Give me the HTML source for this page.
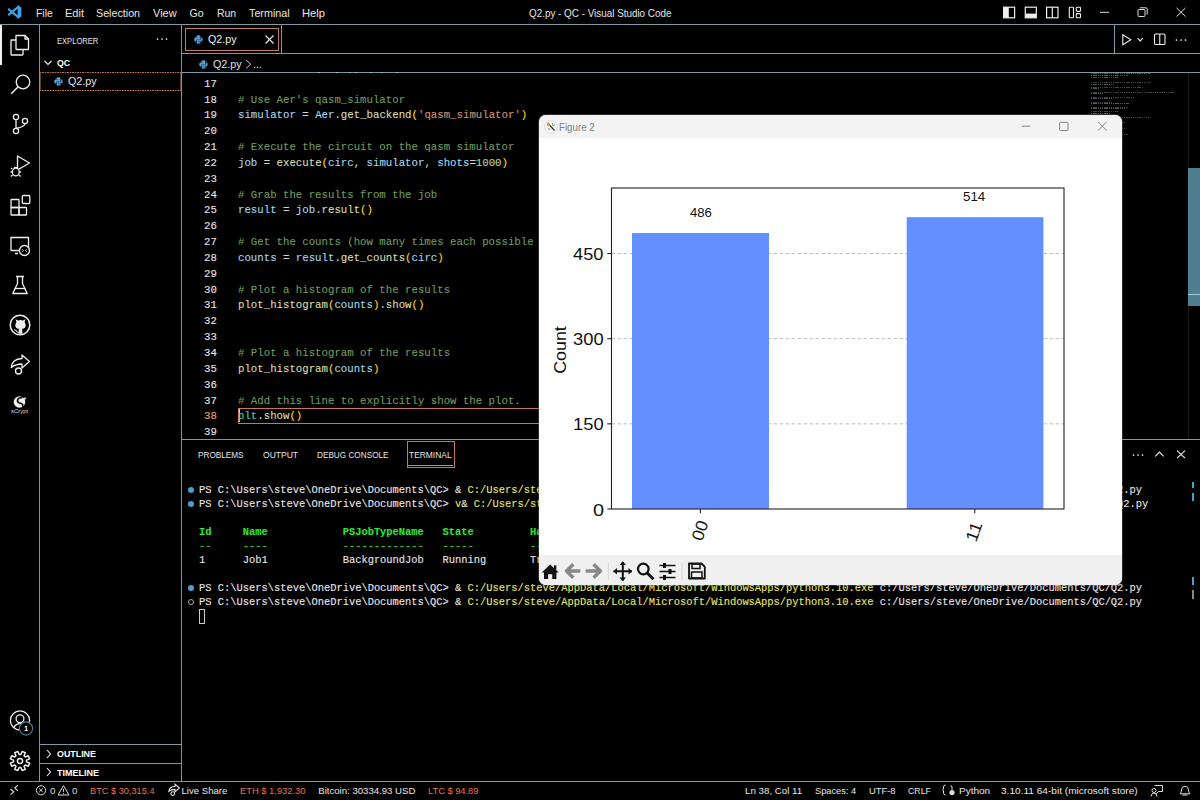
<!DOCTYPE html>
<html><head><meta charset="utf-8">
<style>
*{margin:0;padding:0;box-sizing:border-box}
html,body{width:1200px;height:800px;overflow:hidden;background:#000;color:#fff;font-family:"Liberation Sans",sans-serif}
.a{position:absolute}
.t{position:absolute;white-space:pre;line-height:1}
.m{-webkit-text-stroke:0.12px currentColor}
.m span{-webkit-text-stroke:0.12px}
.hl{position:absolute;background:#7b9ba6}
</style></head><body>

<div class="hl" style="left:0;top:24px;width:1200px;height:1px"></div>
<svg class="a" style="left:0;top:0" width="30" height="24" viewBox="0 0 30 24">
<path d="M18.6 6.6 L8.8 14.6 M18.6 17.4 L8.8 9.4" stroke="#3d9fe6" stroke-width="2.2" stroke-linecap="round"/>
<path d="M17.6 5.6 L21.4 7.4 V16.6 L17.6 18.4 Z" fill="#3d9fe6"/>
</svg>
<div class="t" style="left:35.78px;top:7.54px;font-size:10.50px;color:#e6e6e6;transform:scaleX(0.9900);transform-origin:0 0;">File</div>
<div class="t" style="left:64.75px;top:7.54px;font-size:10.50px;color:#e6e6e6;transform:scaleX(1.0529);transform-origin:0 0;">Edit</div>
<div class="t" style="left:96.46px;top:7.54px;font-size:10.50px;color:#e6e6e6;transform:scaleX(1.0198);transform-origin:0 0;">Selection</div>
<div class="t" style="left:153.15px;top:7.54px;font-size:10.50px;color:#e6e6e6;transform:scaleX(1.0478);transform-origin:0 0;">View</div>
<div class="t" style="left:189.47px;top:7.54px;font-size:10.50px;color:#e6e6e6;">Go</div>
<div class="t" style="left:216.98px;top:7.54px;font-size:10.50px;color:#e6e6e6;transform:scaleX(0.9942);transform-origin:0 0;">Run</div>
<div class="t" style="left:249.21px;top:7.54px;font-size:10.50px;color:#e6e6e6;transform:scaleX(1.0257);transform-origin:0 0;">Terminal</div>
<div class="t" style="left:302.44px;top:7.54px;font-size:10.50px;color:#e6e6e6;transform:scaleX(1.0673);transform-origin:0 0;">Help</div>
<div class="t" style="left:528.81px;top:7.54px;font-size:10.50px;color:#e6e6e6;transform:scaleX(0.9400);transform-origin:0 0;">Q2.py - QC - Visual Studio Code</div>
<svg class="a" style="left:1000px;top:0" width="200" height="24" viewBox="0 0 200 24">
<rect x="3.6" y="7.2" width="11" height="10.6" fill="none" stroke="#eee" stroke-width="1.2"/>
<rect x="3.6" y="7.2" width="5.2" height="10.6" fill="#eee"/>
<rect x="25.3" y="7.2" width="11" height="10.6" fill="none" stroke="#eee" stroke-width="1.2"/>
<rect x="25.3" y="13.6" width="11" height="4.2" fill="#eee"/>
<rect x="46.6" y="7.2" width="11.4" height="10.6" fill="none" stroke="#eee" stroke-width="1.2"/>
<line x1="52.3" y1="7.2" x2="52.3" y2="17.8" stroke="#eee" stroke-width="1.2"/>
<rect x="69.3" y="7.2" width="4.2" height="10.6" rx="0.8" fill="none" stroke="#eee" stroke-width="1.1"/>
<rect x="76.3" y="7.2" width="4.2" height="4.2" rx="0.8" fill="none" stroke="#eee" stroke-width="1.1"/>
<rect x="76.3" y="13.6" width="4.2" height="4.2" rx="0.8" fill="none" stroke="#eee" stroke-width="1.1"/>
<line x1="100" y1="12.3" x2="109" y2="12.3" stroke="#ddd" stroke-width="1"/>
<rect x="138" y="9.5" width="7" height="7" rx="1" fill="none" stroke="#ddd" stroke-width="1"/>
<path d="M140 7.8 H146 Q147.2 7.8 147.2 9 V14.5" fill="none" stroke="#ddd" stroke-width="1"/>
<path d="M176.5 7.9 L185.5 16.6 M185.5 7.9 L176.5 16.6" stroke="#ddd" stroke-width="1"/>
</svg>
<div class="hl" style="left:39px;top:25px;width:1px;height:757px"></div>
<div class="a" style="left:0;top:25px;width:2px;height:40px;background:#f0f0f0"></div>
<svg class="a" style="left:0;top:25px" width="40" height="400" viewBox="0 0 40 400" fill="none" stroke="#eeeeee" stroke-width="1.3" stroke-linejoin="round">
<path d="M16 10.5 H25 L28.5 14 V24 Q28.5 24.5 28 24.5 H16.5 Q16 24.5 16 24 Z"/>
<path d="M25 10.5 V14 H28.5"/>
<path d="M16 15 H11.5 Q11 15 11 15.5 V29.5 Q11 30 11.5 30 H22.5 Q23 30 23 29.5 V24.5"/>
<circle cx="23" cy="57" r="6.8"/>
<path d="M18.2 61.8 L11.2 68.8" stroke-width="1.5"/>
<circle cx="16" cy="92" r="2.6"/>
<circle cx="16" cy="106" r="2.6"/>
<circle cx="25" cy="96" r="2.6"/>
<path d="M16 94.6 V103.4 M25 98.6 Q25 102 16 103.5"/>
<g transform="translate(0,2)"><path d="M17.5 129 L29.5 136 L17.5 143 Z"/>
<ellipse cx="15.8" cy="145" rx="3.4" ry="3.9" fill="#000"/>
<path d="M12 142 L11 141 M19.6 142 L20.6 141 M12.4 145 H10.5 M19.2 145 H21.1 M12.4 148 L11 149.5 M19.2 148 L20.6 149.5 M14 141.3 Q15.8 139.5 17.6 141.3"/></g>
<rect x="11" y="174.5" width="8" height="8" rx="0.6"/>
<rect x="11" y="182.5" width="8" height="7.5" rx="0.6"/>
<rect x="19" y="182.5" width="7.5" height="7.5" rx="0.6"/>
<rect x="22.3" y="170.5" width="7.5" height="8" rx="1"/>
<path d="M11 212.5 H28.5 V225.5 H11 Z M15 228.5 H18"/>
<circle cx="24.5" cy="225.5" r="5" fill="#000"/>
<path d="M22.2 224.3 L23.5 225.5 L22.2 226.7 M26.8 224.3 L25.5 225.5 L26.8 226.7" stroke-width="0.9"/>
<path d="M16 251.5 H24 M17.5 251.5 V258.5 L12.8 268.5 H27.2 L22.5 258.5 V251.5"/>
<path d="M14.5 263.5 H25.5"/>
<circle cx="20" cy="300" r="9.8" stroke-width="1.5"/>
<path d="M15.6 294.2 L16.4 297.2 Q15.3 298.5 15.3 300.2 Q15.3 303.4 18.9 303.8 L18.5 308.8 H22.5 L22.1 303.8 Q25.7 303.4 25.7 300.2 Q25.7 298.5 24.6 297.2 L25.4 294.2 L23 295.4 Q20.5 294.8 18 295.4 Z" fill="#eeeeee" stroke="none"/>
<path d="M14 304.8 Q16 304.8 16.8 306.5 Q17.5 307.4 18.8 307.4" stroke-width="1.1"/>
<path d="M11.2 342.5 Q12 334 22 333.5 V330 L29.5 336.5 L22 343 V339 Q15.5 339 11.2 342.5 Z" stroke-width="1.3"/>
<circle cx="18.5" cy="346" r="3" stroke-width="1.4"/>
</svg>
<svg class="a" style="left:12px;top:395px" width="16" height="14" viewBox="0 0 16 14">
<circle cx="7.5" cy="7" r="5.8" fill="#eee"/>
<path d="M10.5 2.5 Q6 2.5 5.5 5.5 Q5.5 8 9 8.5 Q11.5 9 10.5 11.8" fill="none" stroke="#000" stroke-width="1.6"/>
<path d="M11 3 L14.5 2.5 L13 5 Z" fill="#eee"/>
</svg>
<div class="t" style="left:11.20px;top:408.69px;font-size:5.50px;color:#ddd;transform:scaleX(1.0730);transform-origin:0 0;">sCrypt</div>
<svg class="a" style="left:0;top:700px" width="40" height="80" viewBox="0 0 40 80" fill="none" stroke="#eeeeee" stroke-width="1.3">
<circle cx="20" cy="20.5" r="9.6"/>
<circle cx="20" cy="18.8" r="3.9"/>
<path d="M13.8 27.8 Q15.5 23.6 20 23.6 Q24.5 23.6 26.2 27.8"/>
<circle cx="26" cy="28.5" r="6.6" fill="#000" stroke="#5a7f90" stroke-width="1.1"/>
</svg>
<div class="t" style="left:23.93px;top:724.77px;font-size:7.50px;color:#fff;font-weight:bold;">1</div>
<svg class="a" style="left:9px;top:750px" width="22" height="22" viewBox="-11 -11 22 22" fill="none" stroke="#eeeeee" stroke-width="1.5" stroke-linejoin="round">
<path d="M0.86 -6.54 L2.12 -9.57 L5.27 -8.27 L4.02 -5.24 L5.24 -4.02 L8.27 -5.27 L9.57 -2.12 L6.54 -0.86 L6.54 0.86 L9.57 2.12 L8.27 5.27 L5.24 4.02 L4.02 5.24 L5.27 8.27 L2.12 9.57 L0.86 6.54 L-0.86 6.54 L-2.12 9.57 L-5.27 8.27 L-4.02 5.24 L-5.24 4.02 L-8.27 5.27 L-9.57 2.12 L-6.54 0.86 L-6.54 -0.86 L-9.57 -2.12 L-8.27 -5.27 L-5.24 -4.02 L-4.02 -5.24 L-5.27 -8.27 L-2.12 -9.57 L-0.86 -6.54 Z"/>
<circle cx="0" cy="0" r="2.6"/>
</svg>
<div class="hl" style="left:181px;top:25px;width:1px;height:757px"></div>
<div class="t" style="left:56.62px;top:36.41px;font-size:9.40px;color:#e6e6e6;transform:scaleX(0.8094);transform-origin:0 0;">EXPLORER</div>
<svg class="a" style="left:156.0px;top:36.3px" width="16" height="6" viewBox="0 0 16 6"><circle cx="1.50" cy="3" r="0.85" fill="#fff"/><circle cx="6.00" cy="3" r="0.85" fill="#fff"/><circle cx="10.50" cy="3" r="0.85" fill="#fff"/></svg>
<svg class="a" style="left:43px;top:58px" width="10" height="10" viewBox="0 0 10 10"><path d="M1.5 3 L5 6.5 L8.5 3" fill="none" stroke="#eee" stroke-width="1.1"/></svg>
<div class="t" style="left:56.56px;top:59.26px;font-size:9.30px;color:#fff;font-weight:bold;transform:scaleX(0.9484);transform-origin:0 0;">QC</div>
<div class="a" style="left:40px;top:72px;width:141px;height:1px;background:repeating-linear-gradient(90deg,#c47a52 0 1.5px,#3a2418 1.5px 2.5px);opacity:0.9"></div>
<div class="a" style="left:40px;top:90px;width:141px;height:1px;background:repeating-linear-gradient(90deg,#c47a52 0 1.5px,#3a2418 1.5px 2.5px);opacity:0.9"></div>
<div class="a" style="left:40px;top:72px;width:1px;height:19px;background:#8a6a5a;opacity:0.6"></div>
<div class="a" style="left:180px;top:72px;width:1px;height:19px;background:#8a6a5a;opacity:0.6"></div>
<svg class="a" style="left:54px;top:77px" width="9" height="9" viewBox="0 0 16 16"><path d="M7.9 0.5 C4 0.5 4.3 2.2 4.3 2.2 V4 H8 V4.6 H2.8 C2.8 4.6 0.5 4.3 0.5 8 C0.5 11.8 2.5 11.6 2.5 11.6 H3.8 V9.9 C3.8 9.9 3.7 7.8 5.8 7.8 H9.5 C9.5 7.8 11.4 7.8 11.4 6 V2.4 C11.4 2.4 11.7 0.5 7.9 0.5 Z" fill="#5da3d8"/><path d="M8.1 15.5 C12 15.5 11.7 13.8 11.7 13.8 V12 H8 V11.4 H13.2 C13.2 11.4 15.5 11.7 15.5 8 C15.5 4.2 13.5 4.4 13.5 4.4 H12.2 V6.1 C12.2 6.1 12.3 8.2 10.2 8.2 H6.5 C6.5 8.2 4.6 8.2 4.6 10 V13.6 C4.6 13.6 4.3 15.5 8.1 15.5 Z" fill="#4a8fc4"/></svg>
<div class="t" style="left:67.96px;top:75.84px;font-size:10.50px;color:#e6e6e6;transform:scaleX(1.0191);transform-origin:0 0;">Q2.py</div>
<div class="hl" style="left:40px;top:744px;width:141px;height:1px"></div>
<div class="hl" style="left:40px;top:763px;width:141px;height:1px"></div>
<svg class="a" style="left:44px;top:749px" width="10" height="28" viewBox="0 0 10 28"><path d="M3 1 L6.5 5 L3 9 M3 19 L6.5 23 L3 27" fill="none" stroke="#eee" stroke-width="1.1"/></svg>
<div class="t" style="left:56.56px;top:749.15px;font-size:9.50px;color:#fff;font-weight:bold;transform:scaleX(0.9342);transform-origin:0 0;">OUTLINE</div>
<div class="t" style="left:56.55px;top:767.65px;font-size:9.50px;color:#fff;font-weight:bold;transform:scaleX(0.9462);transform-origin:0 0;">TIMELINE</div>
<div class="a" style="left:185px;top:28px;width:94px;height:23px;border:1.5px solid #c47a52"></div>
<div class="hl" style="left:281px;top:25px;width:1px;height:28px"></div>
<div class="hl" style="left:1114px;top:25px;width:1px;height:28px"></div>
<div class="hl" style="left:182px;top:53px;width:1018px;height:1px"></div>
<svg class="a" style="left:194px;top:35px" width="9" height="9" viewBox="0 0 16 16"><path d="M7.9 0.5 C4 0.5 4.3 2.2 4.3 2.2 V4 H8 V4.6 H2.8 C2.8 4.6 0.5 4.3 0.5 8 C0.5 11.8 2.5 11.6 2.5 11.6 H3.8 V9.9 C3.8 9.9 3.7 7.8 5.8 7.8 H9.5 C9.5 7.8 11.4 7.8 11.4 6 V2.4 C11.4 2.4 11.7 0.5 7.9 0.5 Z" fill="#5da3d8"/><path d="M8.1 15.5 C12 15.5 11.7 13.8 11.7 13.8 V12 H8 V11.4 H13.2 C13.2 11.4 15.5 11.7 15.5 8 C15.5 4.2 13.5 4.4 13.5 4.4 H12.2 V6.1 C12.2 6.1 12.3 8.2 10.2 8.2 H6.5 C6.5 8.2 4.6 8.2 4.6 10 V13.6 C4.6 13.6 4.3 15.5 8.1 15.5 Z" fill="#4a8fc4"/></svg>
<div class="t" style="left:207.96px;top:34.14px;font-size:10.50px;color:#f0f0f0;transform:scaleX(1.0191);transform-origin:0 0;">Q2.py</div>
<svg class="a" style="left:264px;top:34px" width="11" height="11" viewBox="0 0 11 11"><path d="M1.5 1.5 L9.5 9.5 M9.5 1.5 L1.5 9.5" stroke="#f0f0f0" stroke-width="1.1"/></svg>
<svg class="a" style="left:1116px;top:30px" width="84" height="20" viewBox="0 0 84 20" fill="none" stroke="#eee" stroke-width="1.1">
<path d="M6.8 4.8 L14.8 9.8 L6.8 14.8 Z"/>
<path d="M21.5 8.2 L24.2 10.9 L26.9 8.2"/>
<rect x="38.5" y="4" width="10.5" height="10.5" rx="1"/>
<line x1="43.75" y1="4" x2="43.75" y2="14.5"/>
</svg>
<svg class="a" style="left:1175.3px;top:36.5px" width="16" height="6" viewBox="0 0 16 6"><circle cx="1.50" cy="3" r="0.85" fill="#fff"/><circle cx="6.00" cy="3" r="0.85" fill="#fff"/><circle cx="10.50" cy="3" r="0.85" fill="#fff"/></svg>
<svg class="a" style="left:199px;top:60px" width="9" height="9" viewBox="0 0 16 16"><path d="M7.9 0.5 C4 0.5 4.3 2.2 4.3 2.2 V4 H8 V4.6 H2.8 C2.8 4.6 0.5 4.3 0.5 8 C0.5 11.8 2.5 11.6 2.5 11.6 H3.8 V9.9 C3.8 9.9 3.7 7.8 5.8 7.8 H9.5 C9.5 7.8 11.4 7.8 11.4 6 V2.4 C11.4 2.4 11.7 0.5 7.9 0.5 Z" fill="#5da3d8"/><path d="M8.1 15.5 C12 15.5 11.7 13.8 11.7 13.8 V12 H8 V11.4 H13.2 C13.2 11.4 15.5 11.7 15.5 8 C15.5 4.2 13.5 4.4 13.5 4.4 H12.2 V6.1 C12.2 6.1 12.3 8.2 10.2 8.2 H6.5 C6.5 8.2 4.6 8.2 4.6 10 V13.6 C4.6 13.6 4.3 15.5 8.1 15.5 Z" fill="#4a8fc4"/></svg>
<div class="t" style="left:212.96px;top:58.64px;font-size:10.50px;color:#e0e0e0;transform:scaleX(1.0191);transform-origin:0 0;">Q2.py</div>
<svg class="a" style="left:244px;top:58.5px" width="9" height="11" viewBox="0 0 9 11"><path d="M2.2 1 L6.6 5.2 L2.2 9.4" fill="none" stroke="#ddd" stroke-width="1"/></svg>
<div class="t" style="left:253px;top:58.5px;font-size:11px;color:#e0e0e0">...</div>
<div class="hl" style="left:182px;top:72px;width:1018px;height:1px"></div>
<div class="a" style="left:182px;top:73px;width:1018px;height:366px;overflow:hidden">
<div class="a" style="left:56px;top:334.5px;width:847px;height:16px;border:1px solid #c47a52"></div>
<div class="a" style="left:56.5px;top:336px;width:1px;height:13px;background:#ddd"></div>
<div class="t m" style="left:22.0px;top:5.70px;font-family:'Liberation Mono';font-size:11.4px;color:#e6e6e6;transform:scaleX(0.9401);transform-origin:0 0">17</div>
<div class="t m" style="left:22.0px;top:21.54px;font-family:'Liberation Mono';font-size:11.4px;color:#e6e6e6;transform:scaleX(0.9401);transform-origin:0 0">18</div>
<div class="t m" style="left:55.7px;top:21.54px;font-family:'Liberation Mono';font-size:11.4px;transform:scaleX(0.9401);transform-origin:0 0"><span style="color:#6f9a5f"># Use Aer's qasm_simulator</span></div>
<div class="t m" style="left:22.0px;top:37.38px;font-family:'Liberation Mono';font-size:11.4px;color:#e6e6e6;transform:scaleX(0.9401);transform-origin:0 0">19</div>
<div class="t m" style="left:55.7px;top:37.38px;font-family:'Liberation Mono';font-size:11.4px;transform:scaleX(0.9401);transform-origin:0 0"><span style="color:#a6d6f2">simulator</span><span style="color:#d4d4d4"> = </span><span style="color:#a6d6f2">Aer</span><span style="color:#d4d4d4">.</span><span style="color:#dcdcaa">get_backend</span><span style="color:#ffd700">(</span><span style="color:#ce9178">'qasm_simulator'</span><span style="color:#ffd700">)</span></div>
<div class="t m" style="left:22.0px;top:53.22px;font-family:'Liberation Mono';font-size:11.4px;color:#e6e6e6;transform:scaleX(0.9401);transform-origin:0 0">20</div>
<div class="t m" style="left:22.0px;top:69.06px;font-family:'Liberation Mono';font-size:11.4px;color:#e6e6e6;transform:scaleX(0.9401);transform-origin:0 0">21</div>
<div class="t m" style="left:55.7px;top:69.06px;font-family:'Liberation Mono';font-size:11.4px;transform:scaleX(0.9401);transform-origin:0 0"><span style="color:#6f9a5f"># Execute the circuit on the qasm simulator</span></div>
<div class="t m" style="left:22.0px;top:84.90px;font-family:'Liberation Mono';font-size:11.4px;color:#e6e6e6;transform:scaleX(0.9401);transform-origin:0 0">22</div>
<div class="t m" style="left:55.7px;top:84.90px;font-family:'Liberation Mono';font-size:11.4px;transform:scaleX(0.9401);transform-origin:0 0"><span style="color:#a6d6f2">job</span><span style="color:#d4d4d4"> = </span><span style="color:#dcdcaa">execute</span><span style="color:#ffd700">(</span><span style="color:#a6d6f2">circ</span><span style="color:#d4d4d4">, </span><span style="color:#a6d6f2">simulator</span><span style="color:#d4d4d4">, </span><span style="color:#a6d6f2">shots</span><span style="color:#d4d4d4">=</span><span style="color:#b5cea8">1000</span><span style="color:#ffd700">)</span></div>
<div class="t m" style="left:22.0px;top:100.74px;font-family:'Liberation Mono';font-size:11.4px;color:#e6e6e6;transform:scaleX(0.9401);transform-origin:0 0">23</div>
<div class="t m" style="left:22.0px;top:116.58px;font-family:'Liberation Mono';font-size:11.4px;color:#e6e6e6;transform:scaleX(0.9401);transform-origin:0 0">24</div>
<div class="t m" style="left:55.7px;top:116.58px;font-family:'Liberation Mono';font-size:11.4px;transform:scaleX(0.9401);transform-origin:0 0"><span style="color:#6f9a5f"># Grab the results from the job</span></div>
<div class="t m" style="left:22.0px;top:132.42px;font-family:'Liberation Mono';font-size:11.4px;color:#e6e6e6;transform:scaleX(0.9401);transform-origin:0 0">25</div>
<div class="t m" style="left:55.7px;top:132.42px;font-family:'Liberation Mono';font-size:11.4px;transform:scaleX(0.9401);transform-origin:0 0"><span style="color:#a6d6f2">result</span><span style="color:#d4d4d4"> = </span><span style="color:#a6d6f2">job</span><span style="color:#d4d4d4">.</span><span style="color:#dcdcaa">result</span><span style="color:#ffd700">()</span></div>
<div class="t m" style="left:22.0px;top:148.26px;font-family:'Liberation Mono';font-size:11.4px;color:#e6e6e6;transform:scaleX(0.9401);transform-origin:0 0">26</div>
<div class="t m" style="left:22.0px;top:164.10px;font-family:'Liberation Mono';font-size:11.4px;color:#e6e6e6;transform:scaleX(0.9401);transform-origin:0 0">27</div>
<div class="t m" style="left:55.7px;top:164.10px;font-family:'Liberation Mono';font-size:11.4px;transform:scaleX(0.9401);transform-origin:0 0"><span style="color:#6f9a5f"># Get the counts (how many times each possible outcome was measured)</span></div>
<div class="t m" style="left:22.0px;top:179.94px;font-family:'Liberation Mono';font-size:11.4px;color:#e6e6e6;transform:scaleX(0.9401);transform-origin:0 0">28</div>
<div class="t m" style="left:55.7px;top:179.94px;font-family:'Liberation Mono';font-size:11.4px;transform:scaleX(0.9401);transform-origin:0 0"><span style="color:#a6d6f2">counts</span><span style="color:#d4d4d4"> = </span><span style="color:#a6d6f2">result</span><span style="color:#d4d4d4">.</span><span style="color:#dcdcaa">get_counts</span><span style="color:#ffd700">(</span><span style="color:#a6d6f2">circ</span><span style="color:#ffd700">)</span></div>
<div class="t m" style="left:22.0px;top:195.78px;font-family:'Liberation Mono';font-size:11.4px;color:#e6e6e6;transform:scaleX(0.9401);transform-origin:0 0">29</div>
<div class="t m" style="left:22.0px;top:211.62px;font-family:'Liberation Mono';font-size:11.4px;color:#e6e6e6;transform:scaleX(0.9401);transform-origin:0 0">30</div>
<div class="t m" style="left:55.7px;top:211.62px;font-family:'Liberation Mono';font-size:11.4px;transform:scaleX(0.9401);transform-origin:0 0"><span style="color:#6f9a5f"># Plot a histogram of the results</span></div>
<div class="t m" style="left:22.0px;top:227.46px;font-family:'Liberation Mono';font-size:11.4px;color:#e6e6e6;transform:scaleX(0.9401);transform-origin:0 0">31</div>
<div class="t m" style="left:55.7px;top:227.46px;font-family:'Liberation Mono';font-size:11.4px;transform:scaleX(0.9401);transform-origin:0 0"><span style="color:#dcdcaa">plot_histogram</span><span style="color:#ffd700">(</span><span style="color:#a6d6f2">counts</span><span style="color:#ffd700">)</span><span style="color:#d4d4d4">.</span><span style="color:#dcdcaa">show</span><span style="color:#ffd700">()</span></div>
<div class="t m" style="left:22.0px;top:243.30px;font-family:'Liberation Mono';font-size:11.4px;color:#e6e6e6;transform:scaleX(0.9401);transform-origin:0 0">32</div>
<div class="t m" style="left:22.0px;top:259.14px;font-family:'Liberation Mono';font-size:11.4px;color:#e6e6e6;transform:scaleX(0.9401);transform-origin:0 0">33</div>
<div class="t m" style="left:22.0px;top:274.98px;font-family:'Liberation Mono';font-size:11.4px;color:#e6e6e6;transform:scaleX(0.9401);transform-origin:0 0">34</div>
<div class="t m" style="left:55.7px;top:274.98px;font-family:'Liberation Mono';font-size:11.4px;transform:scaleX(0.9401);transform-origin:0 0"><span style="color:#6f9a5f"># Plot a histogram of the results</span></div>
<div class="t m" style="left:22.0px;top:290.82px;font-family:'Liberation Mono';font-size:11.4px;color:#e6e6e6;transform:scaleX(0.9401);transform-origin:0 0">35</div>
<div class="t m" style="left:55.7px;top:290.82px;font-family:'Liberation Mono';font-size:11.4px;transform:scaleX(0.9401);transform-origin:0 0"><span style="color:#dcdcaa">plot_histogram</span><span style="color:#ffd700">(</span><span style="color:#a6d6f2">counts</span><span style="color:#ffd700">)</span></div>
<div class="t m" style="left:22.0px;top:306.66px;font-family:'Liberation Mono';font-size:11.4px;color:#e6e6e6;transform:scaleX(0.9401);transform-origin:0 0">36</div>
<div class="t m" style="left:22.0px;top:322.50px;font-family:'Liberation Mono';font-size:11.4px;color:#e6e6e6;transform:scaleX(0.9401);transform-origin:0 0">37</div>
<div class="t m" style="left:55.7px;top:322.50px;font-family:'Liberation Mono';font-size:11.4px;transform:scaleX(0.9401);transform-origin:0 0"><span style="color:#6f9a5f"># Add this line to explicitly show the plot.</span></div>
<div class="t m" style="left:22.0px;top:338.34px;font-family:'Liberation Mono';font-size:11.4px;color:#f0a070;transform:scaleX(0.9401);transform-origin:0 0">38</div>
<div class="t m" style="left:55.7px;top:338.34px;font-family:'Liberation Mono';font-size:11.4px;transform:scaleX(0.9401);transform-origin:0 0"><span style="color:#4ec9b0">plt</span><span style="color:#d4d4d4">.</span><span style="color:#dcdcaa">show</span><span style="color:#ffd700">()</span></div>
<div class="t m" style="left:22.0px;top:354.18px;font-family:'Liberation Mono';font-size:11.4px;color:#e6e6e6;transform:scaleX(0.9401);transform-origin:0 0">39</div>
</div>
<div class="a" style="left:318px;top:72px;width:2px;height:1px;background:#a8c4cc"></div>
<div class="a" style="left:336px;top:72px;width:2px;height:1px;background:#a8c4cc"></div>
<div class="a" style="left:349px;top:72px;width:2px;height:1px;background:#a8c4cc"></div>
<div class="a" style="left:355px;top:72px;width:2px;height:1px;background:#a8c4cc"></div>
<div class="a" style="left:370px;top:72px;width:2px;height:1px;background:#a8c4cc"></div>
<div class="a" style="left:381px;top:72px;width:2px;height:1px;background:#a8c4cc"></div>
<div class="a" style="left:396px;top:72px;width:2px;height:1px;background:#a8c4cc"></div>
<div class="a" style="left:1091px;top:72.5px;width:59px;height:1.2px;background:repeating-linear-gradient(90deg,#b8c8a8 0 1.3px,transparent 1.3px 2.2px);opacity:0.45"></div>
<div class="a" style="left:1091px;top:75.0px;width:37px;height:1.2px;background:repeating-linear-gradient(90deg,#9cb8c8 0 1.3px,transparent 1.3px 2.2px);opacity:0.45"></div>
<div class="a" style="left:1091px;top:76.5px;width:27px;height:1.2px;background:repeating-linear-gradient(90deg,#9cb8c8 0 1.3px,transparent 1.3px 2.2px);opacity:0.45"></div>
<div class="a" style="left:1091px;top:81.5px;width:59px;height:1.2px;background:repeating-linear-gradient(90deg,#8a9a80 0 1.3px,transparent 1.3px 2.2px);opacity:0.45"></div>
<div class="a" style="left:1091px;top:83.5px;width:23px;height:1.2px;background:repeating-linear-gradient(90deg,#b0c0c8 0 1.3px,transparent 1.3px 2.2px);opacity:0.45"></div>
<div class="a" style="left:1091px;top:86.5px;width:53px;height:1.2px;background:repeating-linear-gradient(90deg,#8a9a80 0 1.3px,transparent 1.3px 2.2px);opacity:0.45"></div>
<div class="a" style="left:1091px;top:88.0px;width:8px;height:1.2px;background:repeating-linear-gradient(90deg,#b0c0c8 0 1.3px,transparent 1.3px 2.2px);opacity:0.45"></div>
<div class="a" style="left:1091px;top:91.5px;width:84px;height:1.2px;background:repeating-linear-gradient(90deg,#8a9a80 0 1.3px,transparent 1.3px 2.2px);opacity:0.45"></div>
<div class="a" style="left:1091px;top:93.0px;width:12px;height:1.2px;background:repeating-linear-gradient(90deg,#b0c0c8 0 1.3px,transparent 1.3px 2.2px);opacity:0.45"></div>
<div class="a" style="left:1091px;top:96.5px;width:43px;height:1.2px;background:repeating-linear-gradient(90deg,#8a9a80 0 1.3px,transparent 1.3px 2.2px);opacity:0.45"></div>
<div class="a" style="left:1091px;top:98.0px;width:22px;height:1.2px;background:repeating-linear-gradient(90deg,#b0c0c8 0 1.3px,transparent 1.3px 2.2px);opacity:0.45"></div>
<div class="a" style="left:1091px;top:101.5px;width:22px;height:1.2px;background:repeating-linear-gradient(90deg,#8a9a80 0 1.3px,transparent 1.3px 2.2px);opacity:0.45"></div>
<div class="a" style="left:1091px;top:103.0px;width:38px;height:1.2px;background:repeating-linear-gradient(90deg,#c0c8b0 0 1.3px,transparent 1.3px 2.2px);opacity:0.45"></div>
<div class="a" style="left:1091px;top:106.5px;width:37px;height:1.2px;background:repeating-linear-gradient(90deg,#8a9a80 0 1.3px,transparent 1.3px 2.2px);opacity:0.45"></div>
<div class="a" style="left:1091px;top:108.0px;width:35px;height:1.2px;background:repeating-linear-gradient(90deg,#c0c8b0 0 1.3px,transparent 1.3px 2.2px);opacity:0.45"></div>
<div class="a" style="left:1091px;top:111.0px;width:27px;height:1.2px;background:repeating-linear-gradient(90deg,#8a9a80 0 1.3px,transparent 1.3px 2.2px);opacity:0.45"></div>
<div class="a" style="left:1091px;top:113.0px;width:19px;height:1.2px;background:repeating-linear-gradient(90deg,#c0c8b0 0 1.3px,transparent 1.3px 2.2px);opacity:0.45"></div>
<div class="a" style="left:1091px;top:116.5px;width:58px;height:1.2px;background:repeating-linear-gradient(90deg,#8a9a80 0 1.3px,transparent 1.3px 2.2px);opacity:0.45"></div>
<div class="a" style="left:1091px;top:118.0px;width:29px;height:1.2px;background:repeating-linear-gradient(90deg,#c0c8b0 0 1.3px,transparent 1.3px 2.2px);opacity:0.45"></div>
<div class="a" style="left:1091px;top:121.5px;width:34px;height:1.2px;background:repeating-linear-gradient(90deg,#8a9a80 0 1.3px,transparent 1.3px 2.2px);opacity:0.45"></div>
<div class="a" style="left:1091px;top:123.0px;width:24px;height:1.2px;background:repeating-linear-gradient(90deg,#c0c8b0 0 1.3px,transparent 1.3px 2.2px);opacity:0.45"></div>
<div class="a" style="left:1091px;top:128.0px;width:34px;height:1.2px;background:repeating-linear-gradient(90deg,#8a9a80 0 1.3px,transparent 1.3px 2.2px);opacity:0.45"></div>
<div class="a" style="left:1091px;top:129.5px;width:19px;height:1.2px;background:repeating-linear-gradient(90deg,#c0c8b0 0 1.3px,transparent 1.3px 2.2px);opacity:0.45"></div>
<div class="a" style="left:1091px;top:133.5px;width:37px;height:1.2px;background:repeating-linear-gradient(90deg,#8a9a80 0 1.3px,transparent 1.3px 2.2px);opacity:0.45"></div>
<div class="a" style="left:1188px;top:73px;width:1px;height:366px;background:#1c1c1c"></div>
<div class="a" style="left:1188px;top:168px;width:12px;height:138px;background:#4f7f8f"></div>
<div class="a" style="left:1188px;top:294px;width:12px;height:1px;background:#a0d0e0"></div>
<div class="hl" style="left:182px;top:439px;width:1018px;height:1px"></div>
<div class="t" style="left:198.34px;top:450.30px;font-size:9.80px;color:#e6e6e6;transform:scaleX(0.8360);transform-origin:0 0;">PROBLEMS</div>
<div class="t" style="left:262.77px;top:450.30px;font-size:9.80px;color:#e6e6e6;transform:scaleX(0.8707);transform-origin:0 0;">OUTPUT</div>
<div class="t" style="left:317.49px;top:450.30px;font-size:9.80px;color:#e6e6e6;transform:scaleX(0.8372);transform-origin:0 0;">DEBUG CONSOLE</div>
<div class="t" style="left:408.78px;top:450.30px;font-size:9.80px;color:#e6e6e6;transform:scaleX(0.8593);transform-origin:0 0;">TERMINAL</div>
<div class="a" style="left:406.5px;top:441px;width:48px;height:27px;border:1px solid #c47a52"></div>
<div class="a" style="left:408px;top:465px;width:45px;height:1px;background:#6fb0cf"></div>
<svg class="a" style="left:1131.5px;top:451.8px" width="16" height="6" viewBox="0 0 16 6"><circle cx="1.50" cy="3" r="0.85" fill="#fff"/><circle cx="6.00" cy="3" r="0.85" fill="#fff"/><circle cx="10.50" cy="3" r="0.85" fill="#fff"/></svg>
<svg class="a" style="left:1150px;top:447px" width="50" height="14" viewBox="0 0 50 14" fill="none" stroke="#eee" stroke-width="1.1">
<path d="M5.2 9.3 L9.4 5 L13.6 9.3"/>
<path d="M27 3.6 L35 11.1 M35 3.6 L27 11.1"/>
</svg>
<div class="t m" style="left:198.7px;top:485.00px;font-family:'Liberation Mono';font-size:11.4px;transform:scaleX(0.9137);transform-origin:0 0"><span style="color:#e6e6e6">PS C:\Users\steve\OneDrive\Documents\QC&gt; &amp; </span><span style="color:#e6e660">C:/Users/steve/AppData/Local/Microsoft/WindowsApps/python3.10.exe</span><span style="color:#e6e6e6"> c:/Users/steve/OneDrive/Documents/QC/Q2.py</span></div>
<div class="a" style="left:187.5px;top:486.90px;width:6px;height:6px;border-radius:50%;background:#4a9fd0"></div>
<div class="t m" style="left:198.7px;top:499.05px;font-family:'Liberation Mono';font-size:11.4px;transform:scaleX(0.9137);transform-origin:0 0"><span style="color:#e6e6e6">PS C:\Users\steve\OneDrive\Documents\QC&gt; </span><span style="color:#e6e660">v</span><span style="color:#e6e6e6">&amp; </span><span style="color:#e6e660">C:/Users/steve/AppData/Local/Microsoft/WindowsApps/python3.10.exe</span><span style="color:#e6e6e6"> c:/Users/steve/OneDrive/Documents/QC/Q2.py</span></div>
<div class="a" style="left:187.5px;top:500.95px;width:6px;height:6px;border-radius:50%;background:#4a9fd0"></div>
<div class="t m" style="left:198.7px;top:527.15px;font-family:'Liberation Mono';font-size:11.4px;font-weight:bold;transform:scaleX(0.9137);transform-origin:0 0"><span style="color:#34e034">Id     Name            PSJobTypeName   State         HasMoreData     Location             Command</span></div>
<div class="t m" style="left:198.7px;top:541.20px;font-family:'Liberation Mono';font-size:11.4px;transform:scaleX(0.9137);transform-origin:0 0"><span style="color:#34e034">--     ----            -------------   -----         -----------     --------             -------</span></div>
<div class="t m" style="left:198.7px;top:555.25px;font-family:'Liberation Mono';font-size:11.4px;transform:scaleX(0.9137);transform-origin:0 0"><span style="color:#e6e6e6">1      Job1            BackgroundJob   Running       True            localhost            </span></div>
<div class="t m" style="left:198.7px;top:583.40px;font-family:'Liberation Mono';font-size:11.4px;transform:scaleX(0.9137);transform-origin:0 0"><span style="color:#e6e6e6">PS C:\Users\steve\OneDrive\Documents\QC&gt; &amp; </span><span style="color:#e6e660">C:/Users/steve/AppData/Local/Microsoft/WindowsApps/python3.10.exe</span><span style="color:#e6e6e6"> c:/Users/steve/OneDrive/Documents/QC/Q2.py</span></div>
<div class="a" style="left:187.5px;top:585.30px;width:6px;height:6px;border-radius:50%;background:#4a9fd0"></div>
<div class="t m" style="left:198.7px;top:597.45px;font-family:'Liberation Mono';font-size:11.4px;transform:scaleX(0.9137);transform-origin:0 0"><span style="color:#e6e6e6">PS C:\Users\steve\OneDrive\Documents\QC&gt; &amp; </span><span style="color:#e6e660">C:/Users/steve/AppData/Local/Microsoft/WindowsApps/python3.10.exe</span><span style="color:#e6e6e6"> c:/Users/steve/OneDrive/Documents/QC/Q2.py</span></div>
<div class="a" style="left:187.5px;top:599.35px;width:6px;height:6px;border-radius:50%;border:1px solid #aaa"></div>
<div class="a" style="left:198.5px;top:609px;width:6.5px;height:15px;border:1px solid #ccc"></div>
<div class="a" style="left:1192px;top:482px;width:2px;height:6px;background:#4a9fd0"></div>
<div class="a" style="left:1192px;top:493px;width:2px;height:8px;background:#4a9fd0"></div>
<div class="a" style="left:1192px;top:577px;width:2px;height:8px;background:#4a9fd0"></div>
<div class="a" style="left:1192px;top:590px;width:2px;height:9px;background:#888"></div>
<div class="hl" style="left:0;top:781px;width:1200px;height:1px"></div>
<svg class="a" style="left:0;top:782px" width="90" height="18" viewBox="0 0 90 18" fill="none" stroke="#ddd" stroke-width="1">
<path d="M10.5 7 L13.8 9.8 L10.5 12.6 M17.8 3.2 L14.8 6 L17.8 8.8" stroke-width="1.1"/>
<circle cx="41" cy="8.3" r="4.6"/>
<path d="M39.2 6.5 L42.8 10.1 M42.8 6.5 L39.2 10.1"/>
<path d="M63.5 3.6 L69 13 H58 Z"/>
<path d="M63.5 6.8 V9.8 M63.5 11 V11.8"/>
</svg>
<div class="t" style="left:49.51px;top:785.50px;font-size:9.60px;color:#ddd;transform:scaleX(1.0226);transform-origin:0 0;">0</div>
<div class="t" style="left:71.51px;top:785.50px;font-size:9.60px;color:#ddd;transform:scaleX(1.0226);transform-origin:0 0;">0</div>
<div class="t" style="left:89.94px;top:785.50px;font-size:9.60px;color:#e8734f;transform:scaleX(0.9601);transform-origin:0 0;">BTC $ 30,315.4</div>
<svg class="a" style="left:167px;top:783px" width="14" height="14" viewBox="0 0 14 14" fill="none" stroke="#ddd" stroke-width="1.2">
<path d="M1.8 8.3 Q2.4 3.6 8 3.4 V1.3 L12.4 5 L8 8.7 V6.4 Q4.2 6.4 1.8 8.3 Z" stroke-width="1.1"/><circle cx="5.8" cy="10.6" r="1.9" stroke-width="1.1"/>
</svg>
<div class="t" style="left:181.52px;top:785.50px;font-size:9.60px;color:#e6e6e6;">Live Share</div>
<div class="t" style="left:239.93px;top:785.50px;font-size:9.60px;color:#e8734f;transform:scaleX(0.9750);transform-origin:0 0;">ETH $ 1,932.30</div>
<div class="t" style="left:318.27px;top:785.50px;font-size:9.60px;color:#e6e6e6;">Bitcoin: 30334.93 USD</div>
<div class="t" style="left:428.29px;top:785.50px;font-size:9.60px;color:#e8734f;transform:scaleX(0.9681);transform-origin:0 0;">LTC $ 94.89</div>
<div class="t" style="left:744.71px;top:785.50px;font-size:9.60px;color:#e6e6e6;transform:scaleX(1.0153);transform-origin:0 0;">Ln 38, Col 11</div>
<div class="t" style="left:814.94px;top:785.50px;font-size:9.60px;color:#e6e6e6;transform:scaleX(0.9641);transform-origin:0 0;">Spaces: 4</div>
<div class="t" style="left:869.13px;top:785.50px;font-size:9.60px;color:#e6e6e6;transform:scaleX(0.9765);transform-origin:0 0;">UTF-8</div>
<div class="t" style="left:908.31px;top:785.50px;font-size:9.60px;color:#e6e6e6;transform:scaleX(0.9119);transform-origin:0 0;">CRLF</div>
<svg class="a" style="left:941px;top:783px" width="16" height="14" viewBox="0 0 16 14" fill="none" stroke="#ddd" stroke-width="1">
<path d="M4.5 2 Q2.5 2 2.5 4 V6 L1.5 7 L2.5 8 V10 Q2.5 12 4.5 12"/>
<circle cx="11" cy="9.5" r="2.6" fill="#ddd" stroke="none"/><path d="M9.5 3 Q10.5 2 11 4 V7"/>
</svg>
<div class="t" style="left:958.90px;top:785.50px;font-size:9.60px;color:#e6e6e6;transform:scaleX(1.0426);transform-origin:0 0;">Python</div>
<div class="t" style="left:1001.20px;top:785.50px;font-size:9.60px;color:#e6e6e6;transform:scaleX(1.0519);transform-origin:0 0;">3.10.11 64-bit (microsoft store)</div>
<svg class="a" style="left:1148px;top:782px" width="52" height="18" viewBox="0 0 52 18" fill="none" stroke="#ddd" stroke-width="1">
<path d="M6.5 3.5 H14.5 V9.5 H10.5 L8 12"/><circle cx="6" cy="8.5" r="2"/><path d="M3 14.5 Q3.5 11 6 11 Q8.5 11 9 14.5"/>
<path d="M34.5 13 H39.5 M32 11.8 Q33.5 10.5 33.5 8 Q33.5 4.2 37 4.2 Q40.5 4.2 40.5 8 Q40.5 10.5 42 11.8 Z"/>
</svg>
<div class="a" style="left:539px;top:115px;width:583px;height:470px;background:#fff;border-radius:7px;overflow:hidden;box-shadow:0 0 0 1px rgba(120,120,120,0.35)">
<div class="a" style="left:0;top:0;width:583px;height:23px;background:#f3f3f3"></div>
<div class="a" style="left:0;top:440px;width:583px;height:30px;background:#f0f0f0"></div>
</div>
<svg class="a" style="left:544px;top:120px" width="14" height="14" viewBox="0 0 14 14">
<circle cx="7" cy="7" r="6.3" fill="#fafafa" stroke="#c8c8c8" stroke-width="0.6"/>
<path d="M3.5 3 L10.5 10.5" stroke="#333" stroke-width="1.3"/>
<path d="M3 2.5 Q5.5 2 6 5.5 Q4.5 7 3 5.5 Z" fill="#e0a030"/>
<path d="M8.5 3 L9 6 L11 4.5" stroke="#5a9a5a" stroke-width="0.9" fill="none"/>
<path d="M4 9 Q6 8 6.5 10" stroke="#c06030" stroke-width="0.9" fill="none"/>
</svg>
<div class="t" style="left:559.31px;top:123.10px;font-size:10.20px;color:#808080;transform:scaleX(0.9573);transform-origin:0 0;">Figure 2</div>
<svg class="a" style="left:1015px;top:115px" width="107" height="23" viewBox="0 0 107 23" fill="none" stroke="#777" stroke-width="0.9">
<path d="M6.7 11.2 H15.3"/>
<rect x="44.6" y="7.3" width="8.4" height="8.2" rx="1"/>
<path d="M83 6.8 L91.7 15.5 M91.7 6.8 L83 15.5"/>
</svg>
<svg class="a" style="left:0;top:0" width="1200" height="800" viewBox="0 0 1200 800"><line x1="611.5" y1="423.84" x2="1064.0" y2="423.84" stroke="#bdbdbd" stroke-width="1" stroke-dasharray="3.6,2.4"/><line x1="611.5" y1="338.68" x2="1064.0" y2="338.68" stroke="#bdbdbd" stroke-width="1" stroke-dasharray="3.6,2.4"/><line x1="611.5" y1="253.52" x2="1064.0" y2="253.52" stroke="#bdbdbd" stroke-width="1" stroke-dasharray="3.6,2.4"/><rect x="632" y="233.08" width="137" height="275.92" fill="#648fff"/><rect x="906.7" y="217.18" width="136.7" height="291.82" fill="#648fff"/><rect x="611.5" y="188.0" width="452.5" height="321.0" fill="none" stroke="#222" stroke-width="1.1"/><line x1="607.3" y1="509.00" x2="611.5" y2="509.00" stroke="#222" stroke-width="1.1"/><line x1="607.3" y1="423.84" x2="611.5" y2="423.84" stroke="#222" stroke-width="1.1"/><line x1="607.3" y1="338.68" x2="611.5" y2="338.68" stroke="#222" stroke-width="1.1"/><line x1="607.3" y1="253.52" x2="611.5" y2="253.52" stroke="#222" stroke-width="1.1"/><line x1="700.40" y1="509.0" x2="700.40" y2="513.2" stroke="#222" stroke-width="1.1"/><line x1="974.75" y1="509.0" x2="974.75" y2="513.2" stroke="#222" stroke-width="1.1"/></svg>
<div class="t" style="left:592.60px;top:502.53px;font-size:16.80px;color:#111;transform:scaleX(1.1858);transform-origin:0 0;">0</div>
<div class="t" style="left:573.08px;top:417.37px;font-size:16.80px;color:#111;transform:scaleX(1.0945);transform-origin:0 0;">150</div>
<div class="t" style="left:573.08px;top:332.21px;font-size:16.80px;color:#111;transform:scaleX(1.0945);transform-origin:0 0;">300</div>
<div class="t" style="left:572.84px;top:247.05px;font-size:16.80px;color:#111;transform:scaleX(1.0856);transform-origin:0 0;">450</div>
<div class="t" style="left:689.74px;top:206.27px;font-size:13.00px;color:#111;transform:scaleX(1.0096);transform-origin:0 0;">486</div>
<div class="t" style="left:963.33px;top:189.67px;font-size:13.00px;color:#111;transform:scaleX(1.0281);transform-origin:0 0;">514</div>
<div class="t" style="left:559.5px;top:349.5px;font-size:16.5px;color:#111;transform:translate(-50%,-50%) rotate(-90deg) scaleX(1.08)">Count</div>
<div class="t" style="left:700.5px;top:530.5px;font-size:16.8px;color:#111;transform:translate(-50%,-50%) rotate(-70deg) scaleX(1.08)">00</div>
<div class="t" style="left:974.5px;top:532px;font-size:16.8px;color:#111;transform:translate(-50%,-50%) rotate(-70deg) scaleX(1.15)">11</div>
<svg class="a" style="left:539px;top:555px" width="180" height="30" viewBox="0 0 180 30">
<path d="M2.7 17.6 L11.2 9.6 L19.7 17.6 L17.4 17.6 V23.9 H13.3 V19.2 H9.1 V23.9 H5 V17.6 Z" fill="#111"/>
<rect x="15" y="10.3" width="2.3" height="4.5" fill="#111"/>
<path d="M34.3 9.2 L27.5 16 L34.3 22.8 M28.2 16 H41.3" fill="none" stroke="#888" stroke-width="3.4" stroke-linejoin="round"/>
<path d="M54.6 9.2 L61.4 16 L54.6 22.8 M60.7 16 H46.7" fill="none" stroke="#888" stroke-width="3.4" stroke-linejoin="round"/>
<line x1="69.4" y1="8" x2="69.4" y2="25" stroke="#d8d8d8" stroke-width="1"/>
<path d="M83.8 7 V25.5 M74.5 16.2 H93" stroke="#111" stroke-width="2"/>
<path d="M80.5 10 L83.8 6.3 L87 10 Z M80.5 22.5 L83.8 26.2 L87 22.5 Z M78 12.9 L74.3 16.2 L78 19.5 Z M89.5 12.9 L93.2 16.2 L89.5 19.5 Z" fill="#111"/>
<circle cx="104.3" cy="14" r="5.3" fill="none" stroke="#111" stroke-width="2.2"/>
<path d="M108 17.8 L114.5 24.3" stroke="#111" stroke-width="3"/>
<path d="M120.5 10.5 H136.5 M120.5 16.5 H136.5 M120.5 22.5 H136.5" stroke="#111" stroke-width="1.4"/>
<rect x="124" y="8" width="3" height="5" fill="#111"/><rect x="129.5" y="14" width="3" height="5" fill="#111"/><rect x="124" y="20" width="3" height="5" fill="#111"/>
<line x1="143" y1="8" x2="143" y2="25" stroke="#d8d8d8" stroke-width="1"/>
<path d="M150 8.5 H162.5 L165.8 11.8 V23.5 H150 Z" fill="none" stroke="#111" stroke-width="1.8" stroke-linejoin="round"/>
<rect x="153" y="9" width="8" height="4.5" fill="none" stroke="#111" stroke-width="1.5"/>
<rect x="152.5" y="17" width="10.5" height="6" fill="none" stroke="#111" stroke-width="1.5"/>
</svg>
</body></html>
